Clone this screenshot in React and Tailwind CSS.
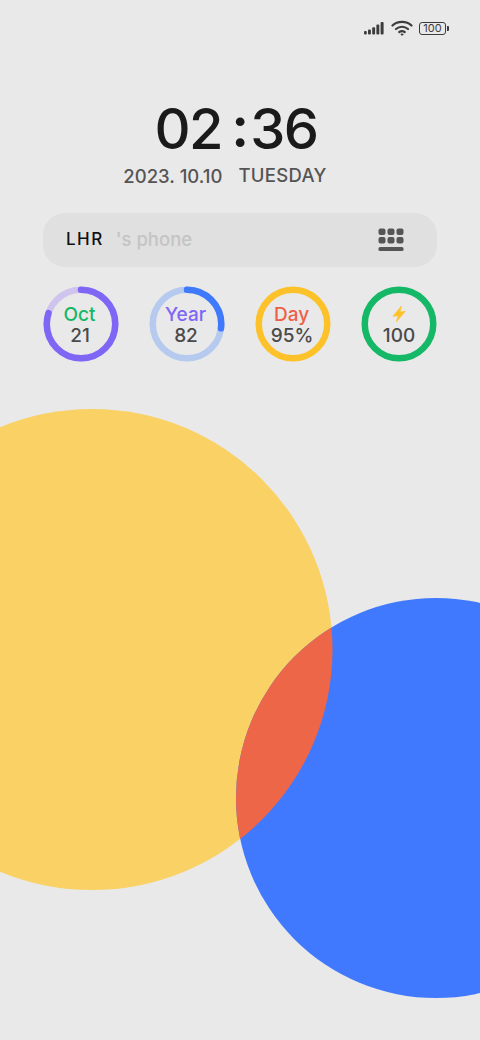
const font = { fontFamily: '"Inter", sans-serif' };

function Ring({ color, track, pct, start = 0, top, bottom, topColor, icon }) {
  const r = 34.25;
  const c = 2 * Math.PI * r;
  return (
    <div className="relative w-[76px] h-[76px] flex flex-col items-center justify-center pt-[1px]">
      <svg className="absolute inset-0" width="76" height="76" viewBox="0 0 76 76">
        <circle cx="38" cy="38" r={r} fill="none" stroke={track} strokeWidth="6.5" />
        {pct < 1 && (
          <circle
            cx="38"
            cy="38"
            r={r}
            fill="none"
            stroke={color}
            strokeWidth="6.5"
            strokeLinecap="round"
            strokeDasharray={`${c * pct} ${c}`}
            transform={`rotate(${start - 90} 38 38)`}
          />
        )}
      </svg>
      {icon ? (
        <svg width="16" height="20" viewBox="-1 -1.5 16 20" className="mb-[1px]">
          <path d="M9.5 0.4 L0.8 10.8 L6.3 10.2 L4.2 16.6 L13.4 5.8 L8 6.5 Z" fill="#fdc12a" stroke="#fdc12a" strokeWidth="0.6" strokeLinejoin="round" />
        </svg>
      ) : (
        <div className="text-[19px] leading-[21px] font-medium mr-[3px]" style={{ color: topColor }}>{top}</div>
      )}
      <div className={icon ? "text-[19px] leading-[21px] font-medium text-[#4a4a4a]" : "text-[19px] leading-[21px] font-medium text-[#4a4a4a] mr-[2px]"}>{bottom}</div>
    </div>
  );
}

export default function App() {
  return (
    <div className="relative w-[480px] h-[1040px] overflow-hidden bg-[#e9e9e9]" style={font}>
      <div className="absolute top-[18px] right-[31px] flex items-center gap-[6px] h-[20px]">
        <svg width="22" height="14" viewBox="0 0 22 14">
          <rect x="1" y="10" width="2.8" height="3.5" rx="1" fill="#3c3c3c" />
          <rect x="5" y="8.4" width="2.9" height="5.1" rx="1" fill="#3c3c3c" />
          <rect x="9.2" y="6.2" width="2.9" height="7.3" rx="1" fill="#3c3c3c" />
          <rect x="13.4" y="3.6" width="2.9" height="9.9" rx="1" fill="#3c3c3c" />
          <rect x="17.6" y="1" width="3" height="12.5" rx="1" fill="#3c3c3c" />
        </svg>
        <svg width="22" height="16" viewBox="0 0 22 16" fill="none" stroke="#3c3c3c" strokeWidth="2.2" strokeLinecap="round">
          <path d="M1.5 5.5 C6.5 0.7 15.5 0.7 20.5 5.5" />
          <path d="M5 9 C8.5 6 13.5 6 17 9" />
          <path d="M8.3 12 C10 10.8 12 10.8 13.7 12" />
          <circle cx="11" cy="14.5" r="0.8" fill="#3c3c3c" strokeWidth="1" />
        </svg>
        <div className="flex items-center gap-[1px]">
          <div className="w-[27px] h-[13px] rounded-[3px] border-[1.5px] border-[#3c3c3c] flex items-center justify-center text-[11px] leading-none text-[#3c3c3c]">100</div>
          <div className="w-[2px] h-[5px] bg-[#3c3c3c] rounded-r-[1px]" />
        </div>
      </div>

      <div className="pt-[99px] flex flex-col items-center">
        <div className="h-[60px] flex items-center justify-center gap-[9px] text-[56px] leading-[60px] text-[#1a1a1a] font-medium tracking-[-1.5px] ml-[-8px]">
          <span>02</span>
          <span className="w-[10px] text-center mt-[-4px] font-semibold">:</span>
          <span>36</span>
        </div>
        <div className="mt-[5px] flex items-center gap-[16px] text-[18.5px] leading-[22px] font-medium text-[#555555] ml-[-30px]">
          <span className="mt-[1px]">2023. 10.10</span>
          <span className="tracking-[0.3px] mt-[-2px]">TUESDAY</span>
        </div>
      </div>

      <div className="mx-[43px] mt-[26px] w-[394px] h-[54px] rounded-[22px] bg-[#e0e0e0] flex items-center pl-[23px] pr-[33px]">
        <span className="text-[17px] font-medium text-[#111111] tracking-[1.5px]">LHR</span>
        <span className="ml-[12px] text-[18.5px] font-medium text-[#c4c4c4]">'s phone</span>
        <svg className="ml-auto" width="26" height="24" viewBox="0 0 26 24" fill="#555555">
          <rect x="0.5" y="0.5" width="7" height="6.5" rx="2" />
          <rect x="9.5" y="0.5" width="7" height="6.5" rx="2" />
          <rect x="18.5" y="0.5" width="7" height="6.5" rx="2" />
          <rect x="0.5" y="9" width="7" height="6.5" rx="2" />
          <rect x="9.5" y="9" width="7" height="6.5" rx="2" />
          <rect x="18.5" y="9" width="7" height="6.5" rx="2" />
          <rect x="0.5" y="19" width="25" height="4" rx="1.5" />
        </svg>
      </div>

      <div className="mt-[19px] px-[43px] flex justify-between w-[480px]">
        <Ring color="#7f66f5" track="#cfc4ee" pct={0.8} top="Oct" bottom="21" topColor="#14b866" />
        <Ring color="#3f79fd" track="#b6caf0" pct={0.27} top="Year" bottom="82" topColor="#7f66f5" />
        <Ring color="#fdc12a" track="#fdc12a" pct={1} top="Day" bottom="95%" topColor="#ee5f48" />
        <Ring color="#14b866" track="#14b866" pct={1} icon bottom="100" />
      </div>

      <svg className="absolute left-0 top-0" width="480" height="1040" viewBox="0 0 480 1040">
        <defs>
          <clipPath id="overlap">
            <circle cx="436" cy="798" r="200" />
          </clipPath>
        </defs>
        <circle cx="92" cy="649.5" r="240.5" fill="#f9d164" />
        <circle cx="436" cy="798" r="200" fill="#4079fe" />
        <circle cx="92" cy="649.5" r="240.5" fill="#ed6648" clipPath="url(#overlap)" />
      </svg>
    </div>
  );
}
